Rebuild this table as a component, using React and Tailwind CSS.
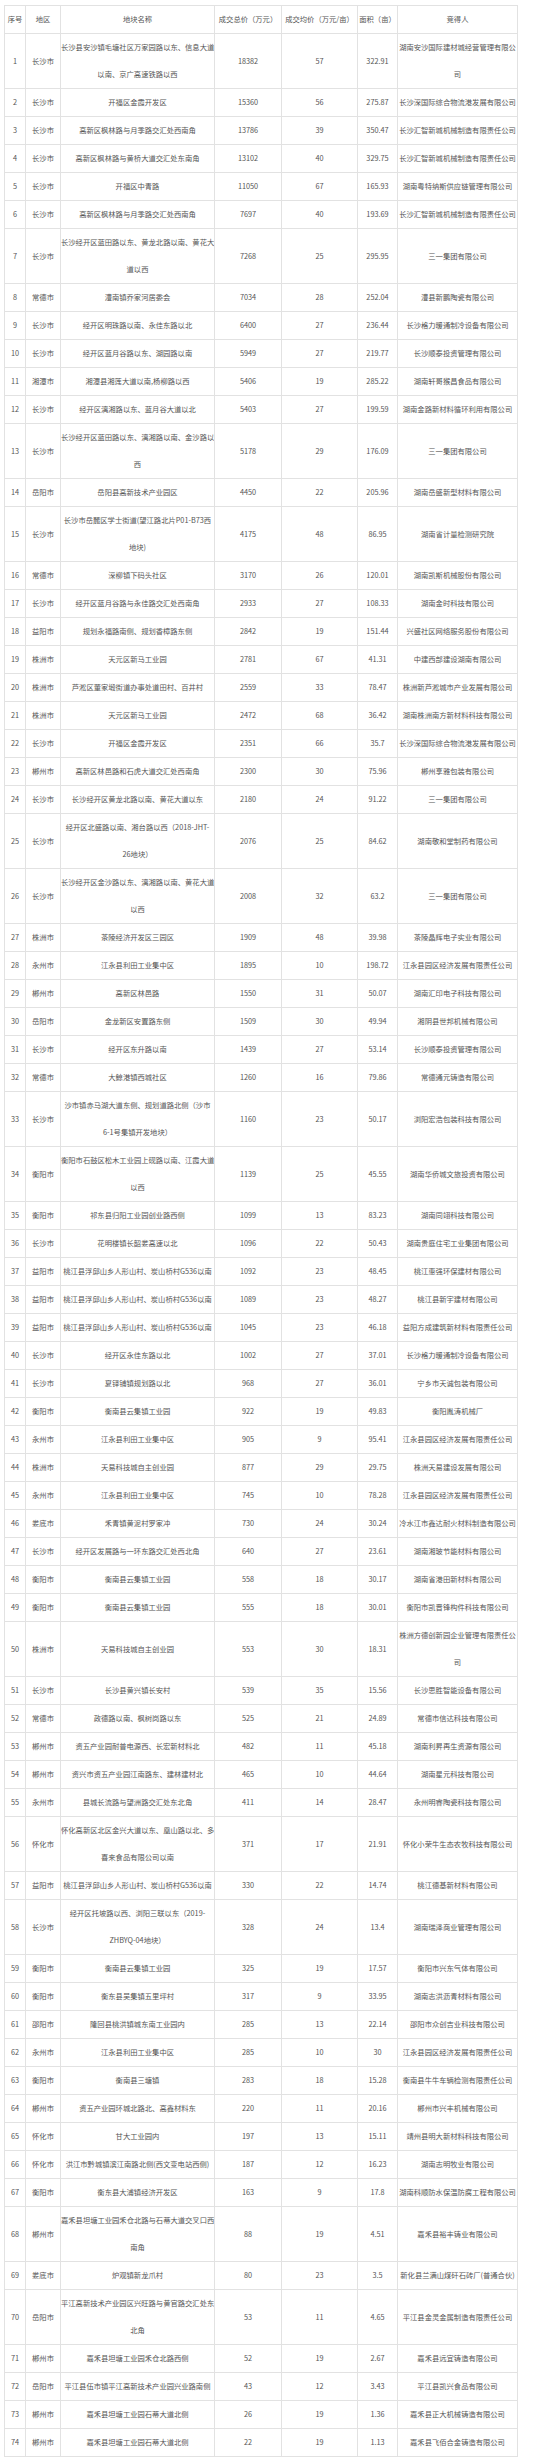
import React from "react";

const HEAD = ["序号", "地区", "地块名称", "成交总价（万元）", "成交均价（万元/亩）", "面积（亩）", "竞得人"];

// [地区, 地块名称, 成交总价, 成交均价, 面积, 竞得人]
const ROWS = [
  ["长沙市", "长沙县安沙镇毛塘社区万家园路以东、信息大道\n以南、京广高速铁路以西", "18382", "57", "322.91", "湖南安沙国际建材城经营管理有限公\n司"],
  ["长沙市", "开福区金霞开发区", "15360", "56", "275.87", "长沙深国际综合物流港发展有限公司"],
  ["长沙市", "高新区枫林路与月季路交汇处西南角", "13786", "39", "350.47", "长沙汇智新城机械制造有限责任公司"],
  ["长沙市", "高新区枫林路与黄桥大道交汇处东南角", "13102", "40", "329.75", "长沙汇智新城机械制造有限责任公司"],
  ["长沙市", "开福区中青路", "11050", "67", "165.93", "湖南粤特纳斯供应链管理有限公司"],
  ["长沙市", "高新区枫林路与月季路交汇处西南角", "7697", "40", "193.69", "长沙汇智新城机械制造有限责任公司"],
  ["长沙市", "长沙经开区蓝田路以东、黄龙北路以南、黄花大\n道以西", "7268", "25", "295.95", "三一集团有限公司"],
  ["常德市", "澧南镇乔家河居委会", "7034", "28", "252.04", "澧县新鹏陶瓷有限公司"],
  ["长沙市", "经开区明珠路以南、永佳东路以北", "6400", "27", "236.44", "长沙格力暖通制冷设备有限公司"],
  ["长沙市", "经开区蓝月谷路以东、湖园路以南", "5949", "27", "219.77", "长沙顺泰投资管理有限公司"],
  ["湘潭市", "湘潭县湘莲大道以南,杨柳路以西", "5406", "19", "285.22", "湖南轩哥猴昌食品有限公司"],
  ["长沙市", "经开区漓湘路以东、蓝月谷大道以北", "5403", "27", "199.59", "湖南金路新材料循环利用有限公司"],
  ["长沙市", "长沙经开区蓝田路以东、漓湘路以南、金沙路以\n西", "5178", "29", "176.09", "三一集团有限公司"],
  ["岳阳市", "岳阳县高新技术产业园区", "4450", "22", "205.96", "湖南岳盛新型材料有限公司"],
  ["长沙市", "长沙市岳麓区学士街道(望江路北片P01-B73西\n地块)", "4175", "48", "86.95", "湖南省计量检测研究院"],
  ["常德市", "深柳镇下码头社区", "3170", "26", "120.01", "湖南凯斯机械股份有限公司"],
  ["长沙市", "经开区蓝月谷路与永佳路交汇处西南角", "2933", "27", "108.33", "湖南金时科技有限公司"],
  ["益阳市", "规划永福路南侧、规划香樟路东侧", "2842", "19", "151.44", "兴盛社区网络服务股份有限公司"],
  ["株洲市", "天元区新马工业园", "2781", "67", "41.31", "中建西部建设湖南有限公司"],
  ["株洲市", "芦淞区董家塅街道办事处道田村、百井村", "2559", "33", "78.47", "株洲新芦淞城市产业发展有限公司"],
  ["株洲市", "天元区新马工业园", "2472", "68", "36.42", "湖南株洲南方新材料科技有限公司"],
  ["长沙市", "开福区金霞开发区", "2351", "66", "35.7", "长沙深国际综合物流港发展有限公司"],
  ["郴州市", "高新区林邑路和石虎大道交汇处西南角", "2300", "30", "75.96", "郴州享雅包装有限公司"],
  ["长沙市", "长沙经开区黄龙北路以南、黄花大道以东", "2180", "24", "91.22", "三一集团有限公司"],
  ["长沙市", "经开区北盛路以南、湘台路以西（2018-JHT-\n26地块）", "2076", "25", "84.62", "湖南敬和堂制药有限公司"],
  ["长沙市", "长沙经开区金沙路以东、漓湘路以南、黄花大道\n以西", "2008", "32", "63.2", "三一集团有限公司"],
  ["株洲市", "茶陵经济开发区三园区", "1909", "48", "39.98", "茶陵晶辉电子实业有限公司"],
  ["永州市", "江永县利田工业集中区", "1895", "10", "198.72", "江永县园区经济发展有限责任公司"],
  ["郴州市", "高新区林邑路", "1550", "31", "50.07", "湖南汇印电子科技有限公司"],
  ["岳阳市", "金龙新区安置路东侧", "1509", "30", "49.94", "湘阴县世邦机械有限公司"],
  ["长沙市", "经开区东升路以南", "1439", "27", "53.14", "长沙顺泰投资管理有限公司"],
  ["常德市", "大鲸港镇西城社区", "1260", "16", "79.86", "常德通元铸造有限公司"],
  ["长沙市", "沙市镇赤马湖大道东侧、规划道路北侧（沙市\n6-1号集镇开发地块）", "1160", "23", "50.17", "浏阳宏浩包装科技有限公司"],
  ["衡阳市", "衡阳市石鼓区松木工业园上砚路以南、江霞大道\n以西", "1139", "25", "45.55", "湖南华侨城文旅投资有限公司"],
  ["衡阳市", "祁东县归阳工业园创业路西侧", "1099", "13", "83.23", "湖南同翊科技有限公司"],
  ["长沙市", "花明楼镇长韶娄高速以北", "1096", "22", "50.43", "湖南贵庭住宅工业集团有限公司"],
  ["益阳市", "桃江县浮邱山乡人形山村、炭山桥村G536以南", "1092", "23", "48.45", "桃江惠强环保建材有限公司"],
  ["益阳市", "桃江县浮邱山乡人形山村、炭山桥村G536以南", "1089", "23", "48.27", "桃江县新宇建材有限公司"],
  ["益阳市", "桃江县浮邱山乡人形山村、炭山桥村G536以南", "1045", "23", "46.18", "益阳方成建筑新材料有限责任公司"],
  ["长沙市", "经开区永佳东路以北", "1002", "27", "37.01", "长沙格力暖通制冷设备有限公司"],
  ["长沙市", "夏铎铺镇规划路以北", "968", "27", "36.01", "宁乡市天诚包装有限公司"],
  ["衡阳市", "衡南县云集镇工业园", "922", "19", "49.83", "衡阳胤涛机械厂"],
  ["永州市", "江永县利田工业集中区", "905", "9", "95.41", "江永县园区经济发展有限责任公司"],
  ["株洲市", "天易科技城自主创业园", "877", "29", "29.75", "株洲天易建设发展有限公司"],
  ["永州市", "江永县利田工业集中区", "745", "10", "78.28", "江永县园区经济发展有限责任公司"],
  ["娄底市", "禾青镇黄泥村罗家冲", "730", "24", "30.24", "冷水江市鑫达耐火材料制造有限公司"],
  ["长沙市", "经开区发展路与一环东路交汇处西北角", "640", "27", "23.61", "湖南湘玻节能材料有限公司"],
  ["衡阳市", "衡南县云集镇工业园", "558", "18", "30.17", "湖南省港田新材料有限公司"],
  ["衡阳市", "衡南县云集镇工业园", "555", "18", "30.01", "衡阳市凯晋锋构件科技有限公司"],
  ["株洲市", "天易科技城自主创业园", "553", "30", "18.31", "株洲方德创新园企业管理有限责任公\n司"],
  ["长沙市", "长沙县黄兴镇长安村", "539", "35", "15.56", "长沙思胜智能设备有限公司"],
  ["常德市", "政德路以南、枫树岗路以东", "525", "21", "24.89", "常德市信达科技有限公司"],
  ["郴州市", "资五产业园耐普电源西、长宏新材料北", "482", "11", "45.18", "湖南利昇再生资源有限公司"],
  ["郴州市", "资兴市资五产业园江南路东、建林建材北", "465", "10", "44.64", "湖南星元科技有限公司"],
  ["永州市", "县城长流路与望洲路交汇处东北角", "411", "14", "28.47", "永州明睿陶瓷科技有限公司"],
  ["怀化市", "怀化高新区北区金兴大道以东、凰山路以北、多\n喜来食品有限公司以南", "371", "17", "21.91", "怀化小荣牛生态农牧科技有限公司"],
  ["益阳市", "桃江县浮邱山乡人形山村、炭山桥村G536以南", "330", "22", "14.74", "桃江德基新材料有限公司"],
  ["长沙市", "经开区托坡路以西、浏阳三联以东（2019-\nZHBYQ-04地块）", "328", "24", "13.4", "湖南瑞泽商业管理有限公司"],
  ["衡阳市", "衡南县云集镇工业园", "325", "19", "17.57", "衡阳市兴东气体有限公司"],
  ["衡阳市", "衡东县吴集镇五里坪村", "317", "9", "33.95", "湖南志洪沥青材料有限公司"],
  ["邵阳市", "隆回县桃洪镇城东南工业园内", "285", "13", "22.14", "邵阳市众创吉业科技有限公司"],
  ["永州市", "江永县利田工业集中区", "285", "10", "30", "江永县园区经济发展有限责任公司"],
  ["衡阳市", "衡南县三塘镇", "283", "18", "15.28", "衡南县牛牛车辆检测有限责任公司"],
  ["郴州市", "资五产业园环城北路北、高鑫材料东", "220", "11", "20.16", "郴州市兴丰机械有限公司"],
  ["怀化市", "甘大工业园内", "197", "13", "15.11", "靖州县明大新材料科技有限公司"],
  ["怀化市", "洪江市黔城镇滨江南路北侧(西文变电站西侧)", "187", "12", "16.23", "湖南志明牧业有限公司"],
  ["衡阳市", "衡东县大浦镇经济开发区", "163", "9", "17.8", "湖南科顺防水保温防腐工程有限公司"],
  ["郴州市", "嘉禾县坦塘工业园禾仓北路与石蒂大道交叉口西\n南角", "88", "19", "4.51", "嘉禾县裕丰铸业有限公司"],
  ["娄底市", "炉观镇新龙爪村", "80", "23", "3.5", "新化县兰满山煤矸石砖厂(普通合伙)"],
  ["岳阳市", "平江高新技术产业园区兴旺路与黄官路交汇处东\n北角", "53", "11", "4.65", "平江县金灵金属制造有限责任公司"],
  ["郴州市", "嘉禾县坦塘工业园禾仓北路西侧", "52", "19", "2.67", "嘉禾县远宜铸造有限公司"],
  ["岳阳市", "平江县伍市镇平江高新技术产业园兴业路南侧", "43", "12", "3.43", "平江县凯兴食品有限公司"],
  ["郴州市", "嘉禾县坦塘工业园石蒂大道北侧", "26", "19", "1.36", "嘉禾县正大机械铸造有限公司"],
  ["郴州市", "嘉禾县坦塘工业园石蒂大道北侧", "22", "19", "1.13", "嘉禾县飞佰合金铸造有限公司"],
];

const cell = "border border-[#e2e2e2] p-0 text-center align-middle leading-[27px] whitespace-pre overflow-hidden";

export default function App() {
  return (
    <div className="min-h-screen bg-white pt-[5px] pl-[4px] font-['Microsoft_YaHei','Noto_Sans_CJK_SC',sans-serif] text-[7.3px] text-[#555555]">
      <table className="table-fixed border-collapse w-[513px]">
        <colgroup>
          <col className="w-[21px]" />
          <col className="w-[35px]" />
          <col className="w-[154px]" />
          <col className="w-[67px]" />
          <col className="w-[76px]" />
          <col className="w-[40px]" />
          <col className="w-[120px]" />
        </colgroup>
        <thead>
          <tr>
            {HEAD.map((h) => (
              <th key={h} className={`${cell} font-normal`}>
                {h}
              </th>
            ))}
          </tr>
        </thead>
        <tbody>
          {ROWS.map((r, i) => (
            <tr key={i}>
              <td className={cell}>{i + 1}</td>
              {r.map((v, j) => (
                <td key={j} className={cell}>
                  {v}
                </td>
              ))}
            </tr>
          ))}
        </tbody>
      </table>
    </div>
  );
}
